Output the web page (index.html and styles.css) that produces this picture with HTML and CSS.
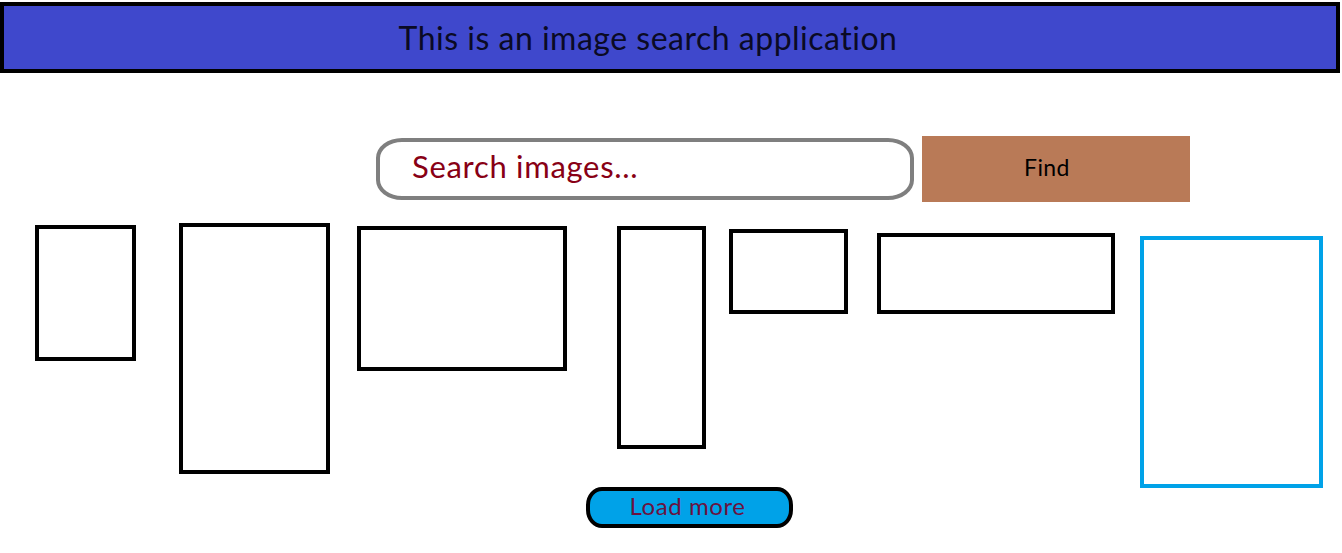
FILE: index.html
```html
<!DOCTYPE html>
<html>
<head>
<meta charset="utf-8">
<link rel="stylesheet" href="styles.css">
</head>
<body>
<header class="top">This is an image search application</header>
<section class="search">
  <div class="search-box">Search images...</div>
  <div class="find">Find</div>
</section>
<section class="results">
  <div class="thumb" style="margin-left:35px;margin-top:2px;width:101px;height:136px"></div>
  <div class="thumb" style="margin-left:43px;margin-top:0;width:151px;height:251px"></div>
  <div class="thumb" style="margin-left:27px;margin-top:3px;width:210px;height:145px"></div>
  <div class="thumb" style="margin-left:50px;margin-top:3px;width:89px;height:223px"></div>
  <div class="thumb" style="margin-left:23px;margin-top:6px;width:119px;height:85px"></div>
  <div class="thumb" style="margin-left:29px;margin-top:10px;width:238px;height:81px"></div>
  <div class="thumb selected" style="margin-left:25px;margin-top:13px;width:183px;height:252px"></div>
</section>
<div class="more-row"><div class="load-more">Load more</div></div>
</body>
</html>
```
FILE: styles.css
```css
html, body {
  margin: 0;
  padding: 0;
  background: #fff;
}
body {
  font-family: Lato, "Open Sans", sans-serif;
  width: 1342px;
  height: 553px;
  overflow: hidden;
}
.top {
  box-sizing: border-box;
  margin-top: 2px;
  width: 1340px;
  height: 71px;
  background: #3f48cc;
  border: 4px solid #000;
  display: flex;
  align-items: center;
  justify-content: center;
  padding-right: 44px;
  color: #0a0a24;
  font-size: 32px;
  letter-spacing: 0.5px;
}
.search {
  display: flex;
  align-items: center;
  gap: 8px;
  padding-left: 376px;
  margin-top: 63px;
}
.search-box {
  box-sizing: border-box;
  width: 538px;
  height: 62px;
  border: 4px solid #7f7f7f;
  border-radius: 26px / 20px;
  display: flex;
  align-items: center;
  padding-left: 32px;
  padding-bottom: 6px;
  color: #880015;
  font-size: 31px;
  letter-spacing: 0.7px;
}
.find {
  box-sizing: border-box;
  width: 268px;
  height: 66px;
  background: #b97a57;
  display: flex;
  align-items: center;
  justify-content: center;
  padding-right: 18px;
  padding-bottom: 4px;
  color: #000;
  font-size: 23px;
  letter-spacing: 0.4px;
}
.results {
  display: flex;
  align-items: flex-start;
  margin-top: 21px;
}
.thumb {
  box-sizing: border-box;
  flex: none;
  border: 4px solid #000;
}
.thumb.selected {
  border-color: #00a2e8;
}
.more-row {
  display: flex;
  padding-left: 586px;
  margin-top: -1px;
}
.load-more {
  box-sizing: border-box;
  width: 207px;
  height: 41px;
  background: #00a2e8;
  border: 4px solid #000;
  border-radius: 16px / 18px;
  display: flex;
  align-items: center;
  justify-content: center;
  padding-right: 4px;
  padding-bottom: 5px;
  color: #6a1240;
  font-size: 24px;
  letter-spacing: 0.6px;
}
```
